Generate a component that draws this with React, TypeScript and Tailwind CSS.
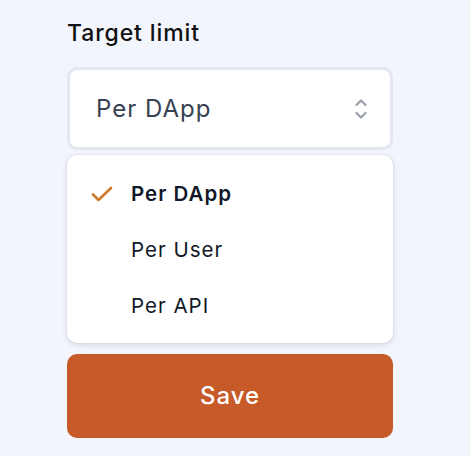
import { useState } from "react";

const options = ["Per DApp", "Per User", "Per API"];

export default function App() {
  const [selected, setSelected] = useState("Per DApp");

  return (
    <div
      className="min-h-screen w-full bg-[#f3f5fd] pt-[18px]"
      style={{ fontFamily: "Inter, 'Noto Sans', sans-serif" }}
    >
      <div className="ml-[67px] flex w-[326px] flex-col">
        <label className="text-[23px] font-medium leading-[31px] tracking-[0.9px] text-[#111111]">Target limit</label>

        <button className="mt-[18px] flex h-[83px] items-center justify-between rounded-[10px] border-[3px] border-[#e4e7ef] bg-white pl-[26px] pr-[22px] text-left">
          <span className="text-[24px] tracking-[1px] text-[#374151]">{selected}</span>
          <svg width="14" height="22" viewBox="0 0 14 22" fill="none" className="text-[#9ca3af]">
            <path d="M2.5 7 L7 2.5 L11.5 7" stroke="currentColor" strokeWidth="2.4" strokeLinecap="round" strokeLinejoin="round" />
            <path d="M2.5 15 L7 19.5 L11.5 15" stroke="currentColor" strokeWidth="2.4" strokeLinecap="round" strokeLinejoin="round" />
          </svg>
        </button>

        <ul className="mt-[5px] rounded-[10px] bg-white pt-[11px] pb-[9px] shadow-[0_2px_6px_rgba(15,23,42,0.12),0_0_0_1px_rgba(15,23,42,0.04)]">
          {options.map((opt) => {
            const active = opt === selected;
            return (
              <li
                key={opt}
                onClick={() => setSelected(opt)}
                className="flex h-[56px] cursor-pointer items-center"
              >
                <span className="flex w-[64px] justify-end pr-[18px]">
                  {active && (
                    <svg width="22" height="16" viewBox="0 0 22 16" fill="none">
                      <path d="M2 8.5 L7.5 14 L20 2" stroke="#d07a2e" strokeWidth="2.6" strokeLinecap="round" strokeLinejoin="round" />
                    </svg>
                  )}
                </span>
                <span className={`text-[20.5px] tracking-[1px] text-[#111827] ${active ? "font-semibold" : "font-normal"}`}>{opt}</span>
              </li>
            );
          })}
        </ul>

        <button className="mt-[11px] flex h-[84px] items-center justify-center rounded-[10px] bg-[#c65a28] text-[24px] font-medium tracking-[1px] text-white">
          Save
        </button>
      </div>
    </div>
  );
}
